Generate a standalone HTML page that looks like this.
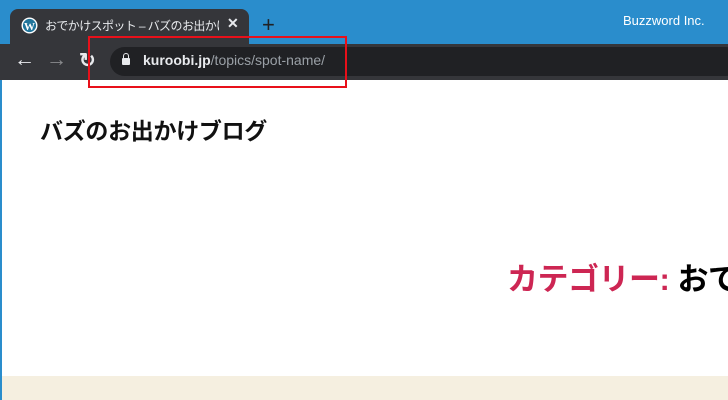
<!DOCTYPE html>
<html><head><meta charset="utf-8"><style>
html,body{margin:0;width:728px;height:400px;overflow:hidden}
body{position:relative;font-family:"Liberation Sans","Noto Sans CJK JP",sans-serif;background:#fff}
.a{position:absolute}
</style></head><body>
<div class="a" style="left:0;top:0;width:728px;height:44px;background:#2a8dcc"></div>
<div class="a" style="left:10px;top:9px;width:239px;height:40px;background:#35363a;border-radius:8px 8px 0 0"></div>
<svg class="a" style="left:21px;top:17px" width="17" height="17" viewBox="0 0 17 17"><circle cx="8.5" cy="8.5" r="8" fill="#fff"/><circle cx="8.5" cy="8.5" r="6.6" fill="#21759b"/><text x="8.5" y="13" font-size="11" font-weight="bold" fill="#fff" text-anchor="middle" font-family="Liberation Serif">W</text></svg>
<div class="a" style="left:45px;top:17px;width:174px;font-size:12px;letter-spacing:-0.6px;color:#e8eaed;white-space:nowrap;overflow:hidden">おでかけスポット – バズのお出かけブログ</div>
<div class="a" style="left:227px;top:15px;font-size:14px;font-weight:bold;color:#e8eaed">✕</div>
<div class="a" style="left:262px;top:12px;font-size:22px;color:#202124">+</div>
<div class="a" style="left:623px;top:13px;font-size:13px;color:#fff">Buzzword Inc.</div>
<div class="a" style="left:0;top:44px;width:728px;height:36px;background:#35363a"></div>
<div class="a" style="left:14px;top:48px;font-size:21px;color:#e8eaed">←</div>
<div class="a" style="left:46px;top:48px;font-size:21px;color:#8a8b8e">→</div>
<div class="a" style="left:79px;top:48px;font-size:20px;font-weight:bold;color:#e8eaed">↻</div>
<div class="a" style="left:110px;top:47px;width:630px;height:29px;background:#202124;border-radius:15px"></div>
<div class="a" style="left:122px;top:58px;width:8px;height:7px;background:#e8eaed;border-radius:1px"></div>
<div class="a" style="left:123px;top:53px;width:4px;height:6px;border:1.5px solid #e8eaed;border-bottom:none;border-radius:3px 3px 0 0"></div>
<div class="a" style="left:143px;top:52px;font-size:14px;color:#e8eaed;white-space:nowrap"><b>kuroobi.jp</b><span style="color:#9aa0a6">/topics/spot-name/</span></div>
<div class="a" style="left:88px;top:36px;width:255px;height:48px;border:2px solid #e8101a"></div>
<div class="a" style="left:0;top:80px;width:2px;height:320px;background:#2a8dcc"></div>
<div class="a" style="left:40px;top:112px;font-size:23px;font-weight:bold;color:#111;white-space:nowrap;letter-spacing:-0.3px">バズのお出かけブログ</div>
<div class="a" style="left:507px;top:254px;width:221px;overflow:hidden;font-size:31px;font-weight:bold;white-space:nowrap;letter-spacing:-0.5px"><span style="color:#cd2653">カテゴリー:</span> <span style="color:#000">おでかけ</span></div>
<div class="a" style="left:2px;top:376px;width:726px;height:24px;background:#f5efe0"></div>
</body></html>
